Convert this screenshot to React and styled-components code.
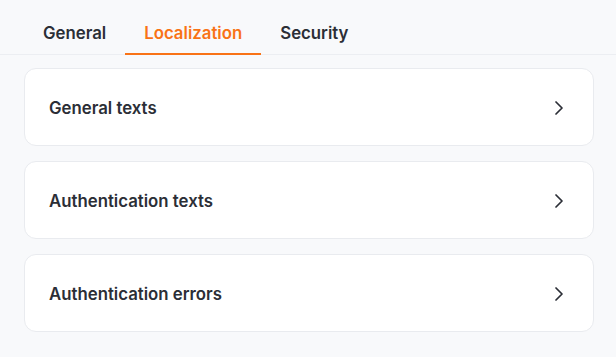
import React, { useState } from "react"
import styled, { createGlobalStyle } from "styled-components"
import { ChevronRight } from "lucide-react"

const GlobalStyle = createGlobalStyle`
  html, body {
    margin: 0;
    padding: 0;
    background: #f8f9fb;
    font-family: Inter, "Noto Sans", sans-serif;
    color: #2b2e36;
  }
`;

const Page = styled.div`
  min-height: 357px;
  background: #f8f9fb;
`;

const TabBar = styled.div`
  display: flex;
  padding: 12px 24px 0;
  border-bottom: 1px solid #eceef2;
`;

const Tab = styled.button`
  position: relative;
  height: 42px;
  padding: 0 19px;
  border: none;
  background: transparent;
  font-family: inherit;
  font-size: 16.8px;
  font-weight: 600;
  color: ${(p) => (p.$active ? "#f97316" : "#2b2e36")};
  cursor: pointer;
  &::after {
    content: "";
    position: absolute;
    left: 0;
    right: 0;
    bottom: -1px;
    height: 2px;
    background: ${(p) => (p.$active ? "#f97316" : "transparent")};
  }
`;

const List = styled.div`
  display: flex;
  flex-direction: column;
  gap: 15px;
  padding: 13px 22px 0 24px;
`;

const Card = styled.div`
  display: flex;
  align-items: center;
  justify-content: space-between;
  height: 78px;
  box-sizing: border-box;
  padding: 1px 22px 0 24px;
  background: #ffffff;
  border: 1px solid #e9ebef;
  border-radius: 12px;
  cursor: pointer;
`;

const CardTitle = styled.span`
  font-size: 16.8px;
  font-weight: 600;
  color: #2b2e36;
`;

const tabs = ["General", "Localization", "Security"];
const sections = ["General texts", "Authentication texts", "Authentication errors"];

export default function App() {
  const [active, setActive] = useState("Localization");

  return (
    <Page>
      <GlobalStyle />
      <TabBar>
        {tabs.map((t) => (
          <Tab key={t} $active={t === active} onClick={() => setActive(t)}>
            {t}
          </Tab>
        ))}
      </TabBar>
      <List>
        {sections.map((s) => (
          <Card key={s}>
            <CardTitle>{s}</CardTitle>
            <ChevronRight size={24} strokeWidth={1.75} color="#2b2e36" />
          </Card>
        ))}
      </List>
    </Page>
  );
}
